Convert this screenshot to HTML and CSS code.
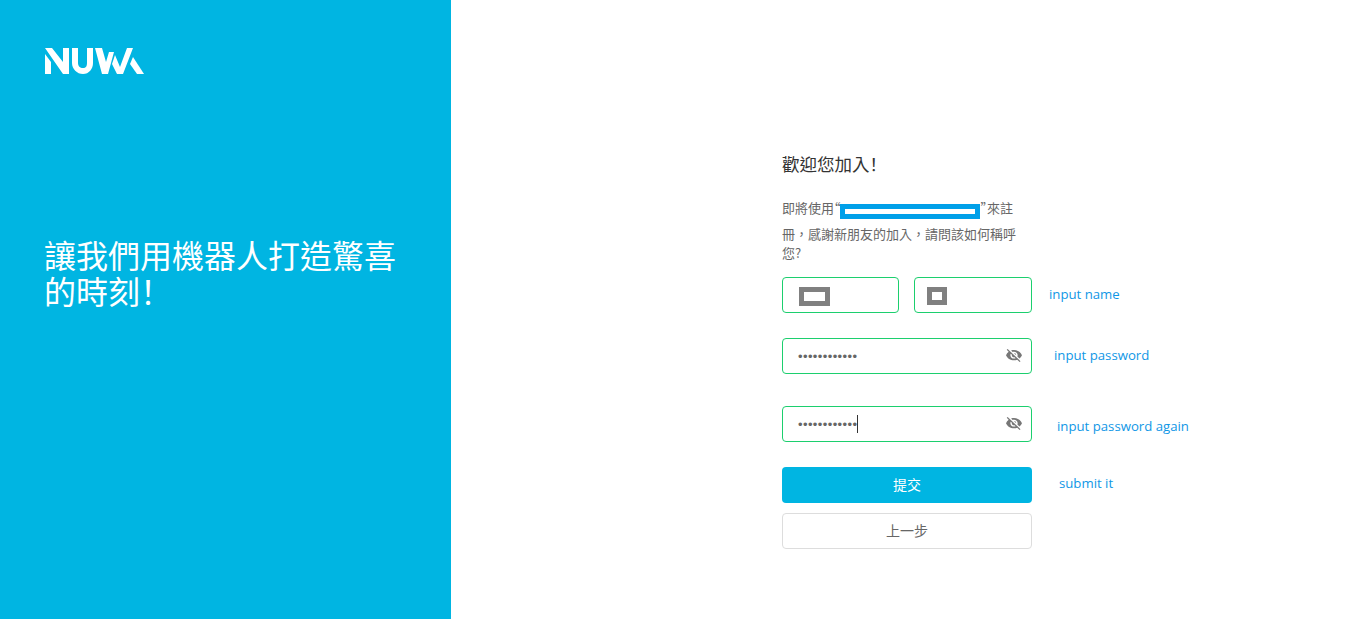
FILE: index.html
```html
<!DOCTYPE html>
<html lang="zh-Hant">
<head>
  <meta charset="UTF-8">
  <title>NUWA</title>
  <link rel="stylesheet" href="styles.css">
</head>
<body>

  <div class="page">
    <aside class="side">
      <svg class="logo" viewBox="0 0 100 28" width="100" height="28" fill="#fff">
        <polygon points="0,1 7,1 18,15 18,1 24,1 24,27 18,27"/>
        <polygon points="0,7 6,15 6,27 0,27"/>
        <path d="M27 1h6v15c0 3 2 5 5 5s4-2 4-5V1h6v15c0 6-4 11-10 11S27 22 27 16z"/>
        <polygon points="50,1 57,1 61,15 64,5 69,5 63,27 57,27"/>
        <polygon points="70,8 75,20 82,1 88,1 78,27 72,27 67,17"/>
        <polygon points="88,10 99,27 92,27 85,17"/>
      </svg>
      <h1 class="slogan">讓我們用機器人打造驚喜的時刻！</h1>
    </aside>

    <main class="main">
      <h2 class="title">歡迎您加入！</h2>
      <p class="desc"><span class="first">即將使用“<span class="mask mask-mail"></span>”來註</span>冊，感謝新朋友的加入，請問該如何稱呼您?</p>

      <div class="row row-name">
        <div class="names">
          <div class="field"><span class="mask mask-last"></span></div>
          <div class="field"><span class="mask mask-first"></span></div>
        </div>
        <span class="note note-name">input name</span>
      </div>

      <div class="row row-pass">
        <div class="field">
          <span class="dots">••••••••••••</span>
          <svg class="eye" viewBox="1 3 22 19" width="16" height="13" preserveAspectRatio="none" fill="#777"><path d="M12 7c2.76 0 5 2.24 5 5 0 .65-.13 1.26-.36 1.83l2.92 2.92c1.51-1.26 2.7-2.89 3.43-4.75-1.73-4.39-6-7.5-11-7.5-1.4 0-2.74.25-3.98.7l2.16 2.16C10.74 7.13 11.35 7 12 7zM2 4.27l2.28 2.28.46.46C3.08 8.3 1.78 10.02 1 12c1.73 4.39 6 7.5 11 7.5 1.55 0 3.03-.3 4.38-.84l.42.42L19.73 22 21 20.73 3.27 3 2 4.27zM7.53 9.8l1.55 1.55c-.05.21-.08.43-.08.65 0 1.66 1.34 3 3 3 .22 0 .44-.03.65-.08l1.55 1.55c-.67.33-1.41.53-2.2.53-2.76 0-5-2.24-5-5 0-.79.2-1.53.53-2.2zm4.31-.78l3.15 3.15.02-.16c0-1.66-1.34-3-3-3l-.17.01z"/></svg>
        </div>
        <span class="note note-pass">input password</span>
      </div>

      <div class="row row-again">
        <div class="field">
          <span class="dots">••••••••••••</span><span class="caret"></span>
          <svg class="eye" viewBox="1 3 22 19" width="16" height="13" preserveAspectRatio="none" fill="#777"><path d="M12 7c2.76 0 5 2.24 5 5 0 .65-.13 1.26-.36 1.83l2.92 2.92c1.51-1.26 2.7-2.89 3.43-4.75-1.73-4.39-6-7.5-11-7.5-1.4 0-2.74.25-3.98.7l2.16 2.16C10.74 7.13 11.35 7 12 7zM2 4.27l2.28 2.28.46.46C3.08 8.3 1.78 10.02 1 12c1.73 4.39 6 7.5 11 7.5 1.55 0 3.03-.3 4.38-.84l.42.42L19.73 22 21 20.73 3.27 3 2 4.27zM7.53 9.8l1.55 1.55c-.05.21-.08.43-.08.65 0 1.66 1.34 3 3 3 .22 0 .44-.03.65-.08l1.55 1.55c-.67.33-1.41.53-2.2.53-2.76 0-5-2.24-5-5 0-.79.2-1.53.53-2.2zm4.31-.78l3.15 3.15.02-.16c0-1.66-1.34-3-3-3l-.17.01z"/></svg>
        </div>
        <span class="note note-again">input password again</span>
      </div>

      <div class="row row-submit">
        <button class="btn btn-primary">提交</button>
        <span class="note note-submit">submit it</span>
      </div>

      <button class="btn btn-back">上一步</button>
    </main>
  </div>

</body>
</html>
```

FILE: styles.css
```css
* {
  box-sizing: border-box;
}

body {
  margin: 0;
  font-family: "Noto Sans CJK TC", "Open Sans", sans-serif;
  color: #666;
  background: #fff;
}

.page {
  display: flex;
  height: 100vh;
  overflow: hidden;
}

.side {
  width: 451px;
  flex-shrink: 0;
  padding: 47px 40px 0 45px;
  background: #00b5e2;
  color: #fff;
}

.logo {
  display: block;
}

.slogan {
  margin: 161px 0 0 -1px;
  font-size: 32px;
  font-weight: 400;
  line-height: 36px;
  font-feature-settings: "halt";
}

.main {
  flex: 1;
  padding: 152px 0 0 331px;
}

.title {
  margin: 0;
  font-size: 17.5px;
  font-weight: 400;
  line-height: 24px;
  color: #333;
  font-feature-settings: "halt";
}

.desc {
  width: 236px;
  margin: 20px 0 0;
  font-family: "Noto Sans CJK JP", sans-serif;
  font-size: 13px;
  line-height: 19px;
}

.first {
  display: block;
  height: 28px;
  line-height: 24px;
  white-space: nowrap;
  font-feature-settings: "halt";
}

.mask {
  display: inline-block;
  background: #fff;
  vertical-align: middle;
}

.mask-mail {
  width: 140px;
  height: 15px;
  margin: 0 1px 0 -1px;
  border: 5px solid #00a0e9;
  vertical-align: -5.5px;
}

.mask-last {
  width: 31px;
  height: 19px;
  margin: 2px 0 0 1px;
  border: 5px solid #808080;
}

.mask-first {
  width: 20px;
  height: 18px;
  margin: 2px 0 0 -3px;
  border: 5px solid #808080;
}

.row {
  display: flex;
  align-items: center;
}

.row-name {
  margin-top: 15px;
}

.row-pass {
  margin-top: 25px;
}

.row-again {
  margin-top: 32px;
}

.row-submit {
  margin-top: 25px;
}

.names {
  display: flex;
  gap: 15px;
  width: 250px;
}

.names .field {
  width: 118px;
}

.names .field:first-child {
  width: 117px;
}

.field {
  display: flex;
  align-items: center;
  width: 250px;
  height: 36px;
  flex-shrink: 0;
  padding: 0 9px 0 15px;
  border: 1px solid #1ccf6e;
  border-radius: 4px;
}

.dots {
  font-family: "Liberation Sans", sans-serif;
  font-size: 13px;
  letter-spacing: 0.4px;
  color: #666;
}

.caret {
  width: 1px;
  height: 18px;
  background: #333;
}

.eye {
  margin: -2px 0 0 auto;
}

.note {
  font-family: "Open Sans", sans-serif;
  font-size: 13.2px;
  color: #1097e6;
}

.note-name {
  margin: -2px 0 0 17px;
}

.note-pass {
  margin: -2px 0 0 22px;
}

.note-again {
  margin: 4px 0 0 25px;
}

.note-submit {
  margin: -4px 0 0 27px;
}

.btn {
  display: block;
  width: 250px;
  height: 36px;
  flex-shrink: 0;
  padding: 0 0 2px;
  border-radius: 4px;
  font-family: inherit;
  font-size: 14px;
}

.btn-primary {
  border: 0;
  background: #00b5e2;
  color: #fff;
}

.btn-back {
  margin-top: 10px;
  border: 1px solid #ddd;
  background: #fff;
  color: #666;
}
```
